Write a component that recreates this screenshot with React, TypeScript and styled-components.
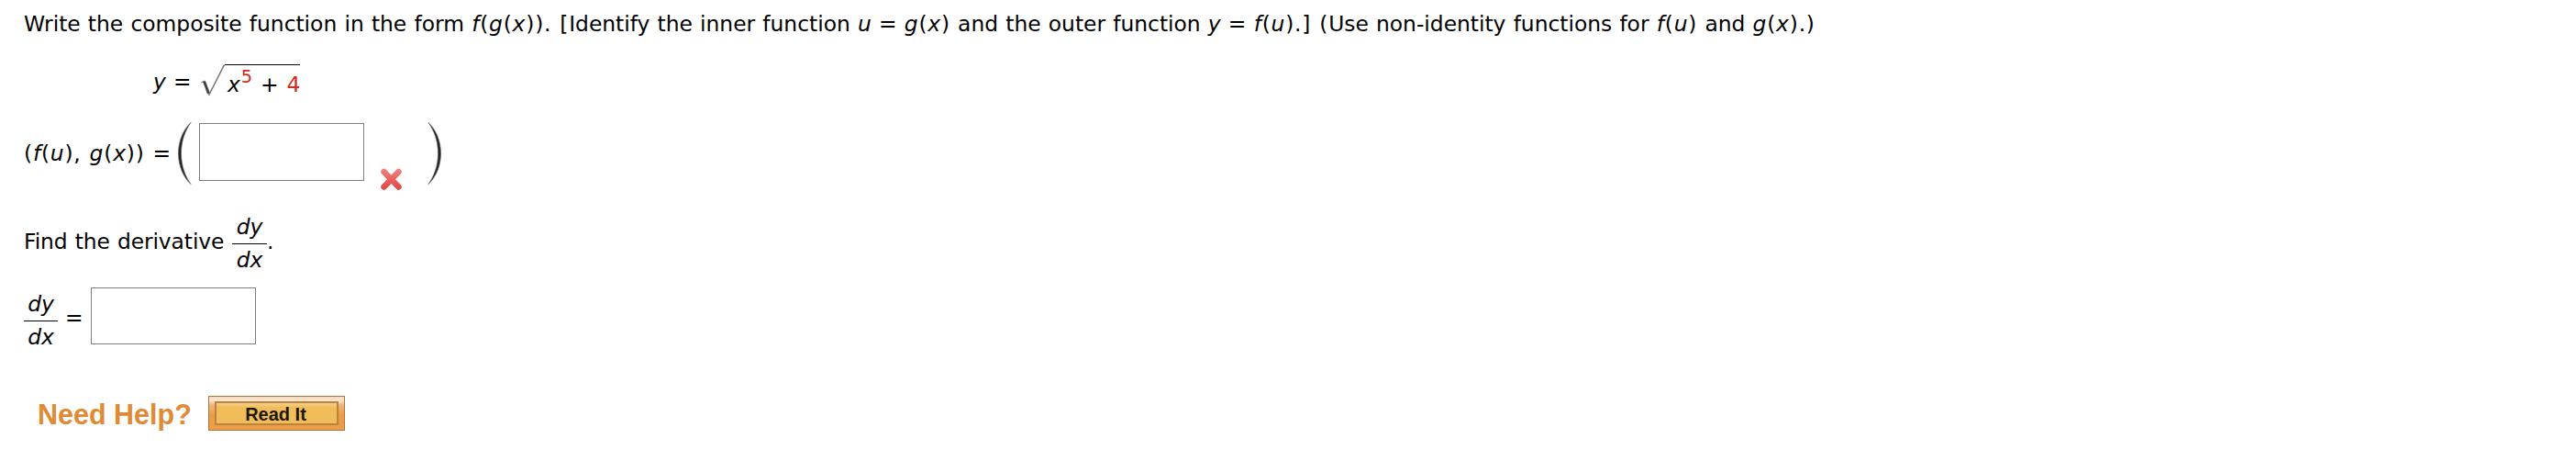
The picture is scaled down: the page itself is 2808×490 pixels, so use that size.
import React from "react";
import styled, { createGlobalStyle } from "styled-components";

const GlobalStyle = createGlobalStyle`
  * {
    box-sizing: border-box;
  }
  body {
    margin: 0;
    background-color: #fff;
  }
`;

const Page = styled.main`
  display: flex;
  flex-direction: column;
  align-items: flex-start;
  height: 490px;
  padding: 11px 26px 0;
  overflow: hidden;
  color: #000;
  font-family: Verdana, "DejaVu Sans", sans-serif;
  font-size: 23.4px;
  line-height: 30px;
  letter-spacing: -0.1px;
  word-spacing: 0.8px;
  white-space: pre;
`;

const Prompt = styled.p`
  margin: 0;
  height: 30px;
  letter-spacing: -0.02px;
`;

const Formula = styled.span`
  letter-spacing: 0.78px;
`;

const Equation = styled.div`
  display: flex;
  align-items: flex-start;
  height: 34px;
  margin: 29px 0 0 141px;
`;

const EquationLeft = styled.span`
  padding-top: 4px;
  width: 52px;
`;

const Radicand = styled.span`
  width: 82px;
  height: 34px;
  padding: 6px 0 0 3px;
  border-top: 1px solid #000;
  word-spacing: 1.6px;
`;

const Value = styled.span`
  color: #d42a20;
`;

const Exponent = styled.sup`
  position: relative;
  top: -10px;
  margin-left: 1px;
  color: #d42a20;
  font-size: 19.5px;
  line-height: 0;
  vertical-align: baseline;
`;

const AnswerRow = styled.div`
  display: flex;
  align-items: flex-start;
  height: 74px;
  margin-top: 29px;
`;

const AnswerLabel = styled.span`
  width: 167px;
  padding-top: 19px;
`;

const AnswerInput = styled.input`
  display: block;
  width: 180px;
  height: ${({ $height }: { $height: number }) => $height}px;
  margin: 1px 0 0;
  padding: 4px 8px;
  border: 1px solid #808080;
  border-radius: 0;
  background-color: #fff;
  font: inherit;
  outline: none;
`;

const WrongMark = styled.svg`
  margin: 50px 28px 0 18px;
`;

const DerivativeRow = styled.div`
  display: flex;
  align-items: flex-start;
  height: 66px;
  margin-top: 25px;
`;

const DerivativeText = styled.span`
  width: 227px;
  padding-top: 16px;
`;

const Period = styled.span`
  padding-top: 16px;
`;

const FractionBox = styled.span`
  display: flex;
  flex-direction: column;
  align-items: center;
  width: ${({ $width }: { $width: number }) => $width}px;
  font-style: italic;
`;

const Numerator = styled.span`
  height: 34px;
  width: 100%;
  border-bottom: 1px solid #000;
  text-align: center;
`;

const Denominator = styled.span`
  padding-top: 2px;
`;

const SolutionRow = styled.div`
  display: flex;
  align-items: flex-start;
  height: 66px;
  margin-top: 18px;
`;

const Equals = styled.span`
  width: 36px;
  padding: 15px 0 0 8px;
`;

const SolutionInput = styled(AnswerInput)`
  margin-top: -3px;
`;

const HelpRow = styled.div`
  display: flex;
  align-items: flex-start;
  margin: 49px 0 0 15px;
  font-family: Arial, "Liberation Sans", sans-serif;
  font-weight: bold;
  letter-spacing: 0;
  word-spacing: 0;
`;

const HelpTitle = styled.span`
  width: 186px;
  padding-top: 3px;
  color: #df8a35;
  font-size: 30.5px;
  line-height: 34px;
`;

const ReadButton = styled.button`
  width: 149px;
  height: 38px;
  margin: 0;
  padding: 5px 6px;
  border: 1px solid #a8783f;
  background: linear-gradient(#f6d9bb 0, #fae6d2 4px, #f0b679 9px, #eb9d48 20px, #eb9d48 100%);
  font: inherit;
`;

const ReadLabel = styled.span`
  display: block;
  height: 26px;
  padding-right: 2px;
  border: 2px solid #b98440;
  background: linear-gradient(#f5cf88 0, #f1bd5b 5px);
  color: #1d1704;
  font-size: 20px;
  line-height: 25px;
  text-align: center;
`;

const Fraction = ({ width }: { width: number }) => (
  <FractionBox $width={width}>
    <Numerator>dy</Numerator>
    <Denominator>dx</Denominator>
  </FractionBox>
);

const Paren = ({ right = false }: { right?: boolean }) => (
  <svg width="24" height="68" viewBox="0 0 24 68">
    <path
      d={
        right
          ? "M1 0.5C9 8 14.5 20 14.5 34S9 60 1 67.5C7 59 11.5 48 11.5 34S7 9 1 0.5Z"
          : "M15 0.5C7 8 1.5 20 1.5 34S7 60 15 67.5C9 59 4.5 48 4.5 34S9 9 15 0.5Z"
      }
      fill="#222"
      stroke="#666"
      strokeWidth="0.7"
    />
  </svg>
);

const Surd = () => (
  <svg width="26" height="35" viewBox="0 0 26 35">
    <path d="M0.5 20L4 18" fill="none" stroke="#888" strokeWidth="1.3" />
    <path d="M3.5 18.5L8.5 32" fill="none" stroke="#444" strokeWidth="3" />
    <path d="M8.5 34L25.5 0.5" fill="none" stroke="#777" strokeWidth="1.6" />
  </svg>
);

const App: React.FC = () => (
  <>
    <GlobalStyle />
    <Page>
      <Prompt>
        Write the composite function in the form <Formula><i>f</i>(<i>g</i>(<i>x</i>)). [</Formula>Identify the inner function <i>u</i> = <Formula><i>g</i>(<i>x</i>)</Formula> and the outer function <i>y</i> = <Formula><i>f</i>(<i>u</i>).] (</Formula>Use non-identity functions for <Formula><i>f</i>(<i>u</i>)</Formula> and <Formula><i>g</i>(<i>x</i>).)</Formula>
      </Prompt>
      <Equation>
        <EquationLeft><i>y</i> =</EquationLeft>
        <Surd />
        <Radicand><i>x</i><Exponent>5</Exponent> + <Value>4</Value></Radicand>
      </Equation>
      <AnswerRow>
        <AnswerLabel><Formula>(<i>f</i>(<i>u</i>), <i>g</i>(<i>x</i>)) =</Formula></AnswerLabel>
        <Paren />
        <AnswerInput $height={63} aria-label="f(u), g(x)" />
        <WrongMark width="23" height="24" viewBox="0 0 23 24">
          <defs>
            <linearGradient id="wrong" x1="0" y1="0" x2="0" y2="24" gradientUnits="userSpaceOnUse">
              <stop offset="0" stopColor="#ef8585" />
              <stop offset="0.6" stopColor="#e95b59" />
              <stop offset="1" stopColor="#df4745" />
            </linearGradient>
          </defs>
          <path d="M3.5 4L19.5 20.5M19.5 4L3.5 20.5" stroke="url(#wrong)" strokeWidth="6.5" strokeLinecap="round" />
        </WrongMark>
        <Paren right />
      </AnswerRow>
      <DerivativeRow>
        <DerivativeText>Find the derivative</DerivativeText>
        <Fraction width={38} />
        <Period>.</Period>
      </DerivativeRow>
      <SolutionRow>
        <Fraction width={37} />
        <Equals>=</Equals>
        <SolutionInput $height={62} aria-label="dy/dx" />
      </SolutionRow>
      <HelpRow>
        <HelpTitle>Need Help?</HelpTitle>
        <ReadButton>
          <ReadLabel>Read It</ReadLabel>
        </ReadButton>
      </HelpRow>
    </Page>
  </>
);

export default App;
